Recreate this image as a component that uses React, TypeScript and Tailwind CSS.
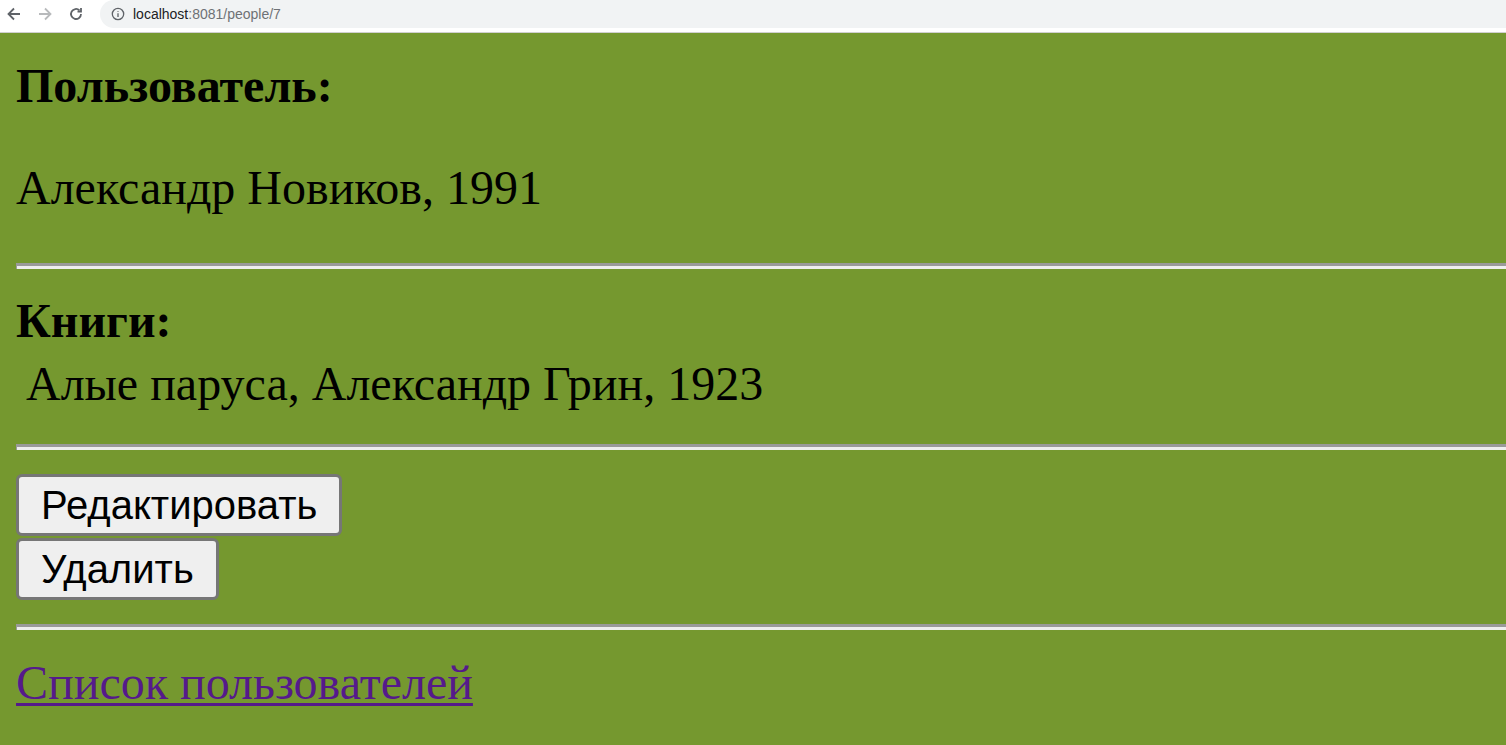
import { FunctionComponent } from "react";

const serif = { fontFamily: '"Liberation Serif", "Times New Roman", serif' };
const sans = { fontFamily: '"Liberation Sans", Arial, sans-serif' };

const Rule: FunctionComponent = () => (
    <div className="ml-4 h-[6px] border-t-[3px] border-l-[1px] border-t-[#9a9a9a] border-l-[#9a9a9a] bg-[#eeeeee]" />
);

const BrowserBar: FunctionComponent = () => (
    <div className="h-[33px] bg-white border-b border-[#d0d0d0] flex items-start">
        <div className="w-[100px] h-[28px] flex items-center pl-[6px] gap-[15px]">
            <svg width="16" height="16" viewBox="0 0 16 16" fill="none" stroke="#5f6368" strokeWidth="1.8">
                <path d="M14 8H2.5M8 2.5L2.5 8L8 13.5" />
            </svg>
            <svg width="16" height="16" viewBox="0 0 16 16" fill="none" stroke="#b8babc" strokeWidth="1.8">
                <path d="M2 8h11.5M8 2.5L13.5 8L8 13.5" />
            </svg>
            <svg width="16" height="16" viewBox="0 0 16 16" fill="none" stroke="#5f6368" strokeWidth="1.8">
                <path d="M13 8a5 5 0 1 1-1.5-3.6" />
                <path d="M13 2v3.5H9.5" />
            </svg>
        </div>
        <div className="flex-1 h-[28px] bg-[#f1f3f4] rounded-l-[14px] flex items-center pl-[11px] gap-[8px]" style={sans}>
            <svg width="14" height="14" viewBox="0 0 16 16" fill="none" stroke="#5f6368" strokeWidth="1.5">
                <circle cx="8" cy="8" r="6.5" />
                <path d="M8 7v4.5M8 4.5v1" />
            </svg>
            <span className="text-[14px] text-[#202124] leading-none">
                localhost<span className="text-[#6e7175]">:8081/people/7</span>
            </span>
        </div>
    </div>
);

export default function App() {
    return (
        <div className="min-h-[745px] bg-[#75982f] text-black">
            <BrowserBar />
            <div className="pl-4">
                <div className="pt-[26px] text-[48px] leading-[53px] font-bold" style={serif}>Пользователь:</div>
                <div className="pt-[49px] text-[48px] leading-[53px]" style={serif}>Александр Новиков, 1991</div>
            </div>
            <div className="mt-[49px]"><Rule /></div>
            <div className="pl-4">
                <div className="pt-[25px] text-[48px] leading-[53px] font-bold" style={serif}>Книги:</div>
                <div className="pt-[10px] pl-[10px] text-[48px] leading-[53px]" style={serif}>Алые паруса, Александр Грин, 1923</div>
            </div>
            <div className="mt-[34px]"><Rule /></div>
            <div className="pl-4 pt-[24px] flex flex-col items-start gap-[2px]" style={sans}>
                <button className="h-[62px] px-[22px] bg-[#efefef] border-[3px] border-[#767676] rounded-[6px] text-[40px] leading-none text-black">
                    Редактировать
                </button>
                <button className="h-[62px] px-[22px] bg-[#efefef] border-[3px] border-[#767676] rounded-[6px] text-[40px] leading-none text-black">
                    Удалить
                </button>
            </div>
            <div className="mt-[24px]"><Rule /></div>
            <div className="pl-4 pt-[26px]">
                <a href="#" className="text-[48px] leading-[53px] text-[#551a8b] underline decoration-[3px] underline-offset-[4px]" style={serif}>
                    Список пользователей
                </a>
            </div>
        </div>
    );
}
